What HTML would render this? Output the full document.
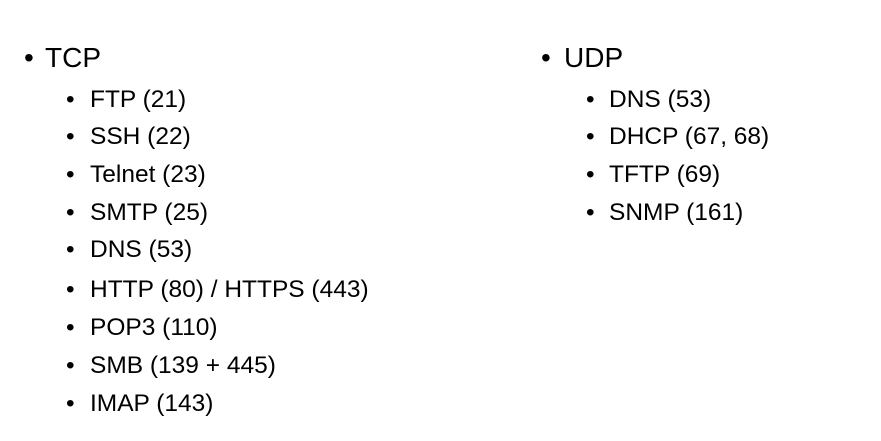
<!DOCTYPE html>
<html><head><meta charset="utf-8"><style>
body{margin:0;width:881px;height:441px;background:#fff;font-family:"Liberation Sans",sans-serif;color:#000;position:relative;overflow:hidden}
.t{position:absolute;white-space:nowrap;line-height:1}
.h{font-size:28px}
.s{font-size:24.5px}
</style></head><body>
<div class="t h" style="left:24px;top:44px">•</div><div class="t h" style="left:45px;top:44px">TCP</div>
<div class="t s" style="left:66px;top:88px">•</div><div class="t s" style="left:90px;top:88px">FTP (21)</div>
<div class="t s" style="left:66px;top:125px">•</div><div class="t s" style="left:90px;top:125px">SSH (22)</div>
<div class="t s" style="left:66px;top:163px">•</div><div class="t s" style="left:90px;top:163px">Telnet (23)</div>
<div class="t s" style="left:66px;top:201px">•</div><div class="t s" style="left:90px;top:201px">SMTP (25)</div>
<div class="t s" style="left:66px;top:238px">•</div><div class="t s" style="left:90px;top:238px">DNS (53)</div>
<div class="t s" style="left:66px;top:278px">•</div><div class="t s" style="left:90px;top:278px">HTTP (80) / HTTPS (443)</div>
<div class="t s" style="left:66px;top:316px">•</div><div class="t s" style="left:90px;top:316px">POP3 (110)</div>
<div class="t s" style="left:66px;top:354px">•</div><div class="t s" style="left:90px;top:354px">SMB (139 + 445)</div>
<div class="t s" style="left:66px;top:392px">•</div><div class="t s" style="left:90px;top:392px">IMAP (143)</div>
<div class="t h" style="left:541px;top:44px">•</div><div class="t h" style="left:564px;top:44px">UDP</div>
<div class="t s" style="left:586px;top:88px">•</div><div class="t s" style="left:609px;top:88px">DNS (53)</div>
<div class="t s" style="left:586px;top:125px">•</div><div class="t s" style="left:609px;top:125px">DHCP (67, 68)</div>
<div class="t s" style="left:586px;top:163px">•</div><div class="t s" style="left:609px;top:163px">TFTP (69)</div>
<div class="t s" style="left:586px;top:201px">•</div><div class="t s" style="left:609px;top:201px">SNMP (161)</div>
</body></html>
